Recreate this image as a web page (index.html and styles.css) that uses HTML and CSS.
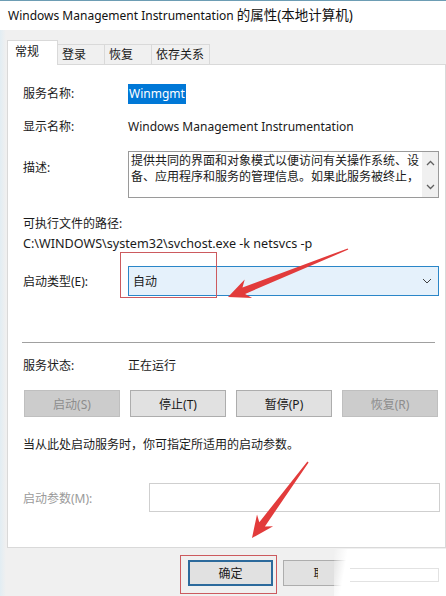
FILE: index.html
```html
<!DOCTYPE html>
<html lang="zh-CN">
<head>
    <meta charset="UTF-8">
    <title>Windows Management Instrumentation 的属性(本地计算机)</title>
    <link rel="stylesheet" href="styles.css">
</head>
<body>
    <div class="window">
        <!-- title bar -->
        <div class="titlebar">Windows Management Instrumentation <span class="title-cjk">的属性(本地计算机)</span></div>

        <!-- tab strip -->
        <div class="tabs">
            <div class="tab active">常规</div>
            <div class="tab tab-login">登录</div>
            <div class="tab tab-recover">恢复</div>
            <div class="tab tab-deps">依存关系</div>
        </div>

        <!-- general page -->
        <div class="panel">
            <div class="row r-name">
                <span class="label">服务名称:</span>
                <span class="value"><span class="selected">Winmgmt</span></span>
            </div>
            <div class="row r-display">
                <span class="label">显示名称:</span>
                <span class="value">Windows Management Instrumentation</span>
            </div>
            <div class="row r-desc">
                <span class="label desc-label">描述:</span>
                <div class="desc-box">
                    <div class="desc-text">提供共同的界面和对象模式以便访问有关操作系统、设<br>备、应用程序和服务的管理信息。如果此服务被终止，</div>
                    <div class="scrollbar">
                        <svg width="9" height="6" viewBox="0 0 9 6"><path d="M1 5 L4.5 1.5 L8 5" fill="none" stroke="#606060" stroke-width="1.3"/></svg>
                        <svg width="9" height="6" viewBox="0 0 9 6"><path d="M1 1 L4.5 4.5 L8 1" fill="none" stroke="#606060" stroke-width="1.3"/></svg>
                    </div>
                </div>
            </div>
            <div class="row r-exe">可执行文件的路径:</div>
            <div class="row r-path">C:\WINDOWS\system32\svchost.exe -k netsvcs -p</div>
            <div class="row r-type">
                <span class="label">启动类型(E):</span>
                <div class="select">
                    <span>自动</span>
                    <svg width="10" height="6" viewBox="0 0 10 6"><path d="M1 1 L5 5 L9 1" fill="none" stroke="#404040" stroke-width="1"/></svg>
                </div>
            </div>

            <div class="sep"></div>

            <div class="row r-status">
                <span class="label">服务状态:</span>
                <span class="value">正在运行</span>
            </div>
            <div class="svc-buttons">
                <button class="btn disabled">启动(S)</button>
                <button class="btn">停止(T)</button>
                <button class="btn">暂停(P)</button>
                <button class="btn disabled">恢复(R)</button>
            </div>
            <div class="row r-hint">当从此处启动服务时，你可指定所适用的启动参数。</div>
            <div class="row r-param">
                <span class="label param-label">启动参数(M):</span>
                <div class="param-input"></div>
            </div>
        </div>

        <!-- dialog buttons -->
        <div class="footer">
            <button class="btn btn-ok">确定</button>
            <button class="btn btn-cancel">取消</button>
        </div>

        <!-- annotations drawn over the screenshot -->
        <div class="mark mark-type"></div>
        <div class="mark mark-ok"></div>
        <svg class="arrows" width="446" height="596" viewBox="0 0 446 596">
            <polygon points="347.7,248.4 242.5,287.5 244.7,279.5 228,297 252.1,298.1 245.1,293.9 348.3,249.6" fill="#e23b3b"/>
            <polygon points="307.4,461.6 259.3,522.2 257.0,514.4 252,538 273.1,526.2 264.9,526.4 308.6,462.4" fill="#e23b3b"/>
        </svg>
        <div class="erase"></div>
        <div class="smudge"><div class="smudge-box"></div></div>
    </div>
</body>
</html>
```

FILE: styles.css
```css
body {
    margin: 0;
    background: #f0f0f0;
    font-family: "Noto Sans", "Noto Sans CJK SC", sans-serif;
    font-size: 12px;
    color: #1a1a1a;
}

.window {
    position: relative;
    width: 446px;
    height: 596px;
    overflow: hidden;
    background: linear-gradient(to right, #e2edf3 0, #f0f0f0 6px);
}

/* title bar */
.titlebar {
    height: 29px;
    border-top: 1px solid #6d9db4;
    background: #fff;
    padding-left: 8px;
    font-size: 12px;
    line-height: 29px;
    color: #111;
}

.title-cjk {
    font-size: 13.5px;
}

/* tabs */
.tabs {
    display: flex;
    align-items: flex-end;
    height: 24px;
    margin-top: 10px;
    padding-left: 7px;
}

.tab {
    box-sizing: border-box;
    height: 20px;
    border: 1px solid #d9d9d9;
    border-bottom: none;
    border-left: none;
    padding-left: 4px;
    line-height: 19px;
    background: #f0f0f0;
}

.tab.active {
    width: 51px;
    height: 25px;
    margin-bottom: -1px;
    border-left: 1px solid #d9d9d9;
    padding-left: 7px;
    line-height: 22px;
    background: #fff;
    position: relative;
}

.tab-login,
.tab-recover {
    width: 47px;
}

.tab-deps {
    width: 58px;
}

/* page */
.panel {
    box-sizing: border-box;
    width: 439px;
    height: 484px;
    margin-left: 7px;
    padding: 0 6px 0 15px;
    border: 1px solid #d9d9d9;
    background: #fff;
}

.row {
    display: flex;
    align-items: center;
    height: 18px;
}

.label {
    width: 105px;
    flex: none;
}

.selected {
    background: #0078d7;
    color: #fff;
    padding: 1px 1px 2px;
}

.r-name { margin-top: 19px; }
.r-display { margin-top: 15px; }

.r-desc {
    margin-top: 16px;
    height: auto;
    align-items: flex-start;
}

.desc-label {
    padding-top: 7px;
}

.desc-box {
    display: flex;
    flex: 1;
    height: 47px;
    box-sizing: border-box;
    border: 1px solid #9a9a9a;
}

.desc-text {
    flex: 1;
    padding: 1px 0 0 2px;
    line-height: 16px;
    white-space: nowrap;
}

.scrollbar {
    width: 16px;
    background: #f0f0f0;
    display: flex;
    flex-direction: column;
    align-items: center;
    justify-content: space-between;
    padding: 8px 0 7px;
    box-sizing: border-box;
}

.r-exe { margin-top: 16px; }

.r-path {
    margin-top: 2px;
    font-size: 12.6px;
}

.r-type {
    margin-top: 14px;
    height: 30px;
}

.select {
    flex: 1;
    height: 30px;
    box-sizing: border-box;
    border: 1px solid #2a86c8;
    background: #e5f1fb;
    display: flex;
    align-items: center;
    justify-content: space-between;
    padding: 0 6px 0 4px;
}

.sep {
    margin: 46px 4px 0 -1px;
    border-top: 1px solid #a0a0a0;
}

.r-status { margin-top: 13px; }

.svc-buttons {
    display: flex;
    gap: 10px;
    margin-top: 16px;
    padding-left: 1px;
}

.btn {
    box-sizing: border-box;
    width: 96px;
    height: 27px;
    border: 1px solid #adadad;
    background: #e1e1e1;
    font-family: inherit;
    font-size: 12px;
    color: #1a1a1a;
    padding: 0;
}

.btn.disabled {
    background: #cccccc;
    border-color: #bfbfbf;
    color: #8d8d8d;
}

.r-hint { margin-top: 18px; }

.r-param {
    margin-top: 30px;
    height: 29px;
}

.param-label {
    width: 126px;
    color: #9a9a9a;
}

.param-input {
    flex: 1;
    height: 29px;
    margin-right: -1px;
    box-sizing: border-box;
    border: 1px solid #cfcfcf;
}

/* dialog buttons */
.footer {
    display: flex;
    gap: 10px;
    margin-top: 12px;
    padding-left: 188px;
}

.btn-ok,
.btn-cancel {
    width: 85px;
    height: 26px;
}

.btn-ok {
    border: 2px solid #2c6a9c;
}

/* annotations */
.mark {
    position: absolute;
    border: 1px solid #cc5a5e;
}

.mark-type {
    left: 120px;
    top: 252px;
    width: 95px;
    height: 44px;
}

.mark-ok {
    left: 180px;
    top: 555px;
    width: 95px;
    height: 37px;
}

.arrows {
    position: absolute;
    left: 0;
    top: 0;
    pointer-events: none;
}

/* watermark damage over the cancel button */
.erase {
    position: absolute;
    left: 318px;
    top: 563px;
    width: 26px;
    height: 20px;
    background: #e1e1e1;
}

.smudge {
    position: absolute;
    left: 334px;
    top: 549px;
    width: 112px;
    height: 47px;
    background: linear-gradient(100deg, rgba(255, 255, 255, 0) 0, #fff 14px);
}

.smudge-box {
    position: absolute;
    left: 16px;
    top: 19px;
    width: 88px;
    height: 12px;
    border: 1px solid #e2e2e2;
    border-left: none;
}
```
